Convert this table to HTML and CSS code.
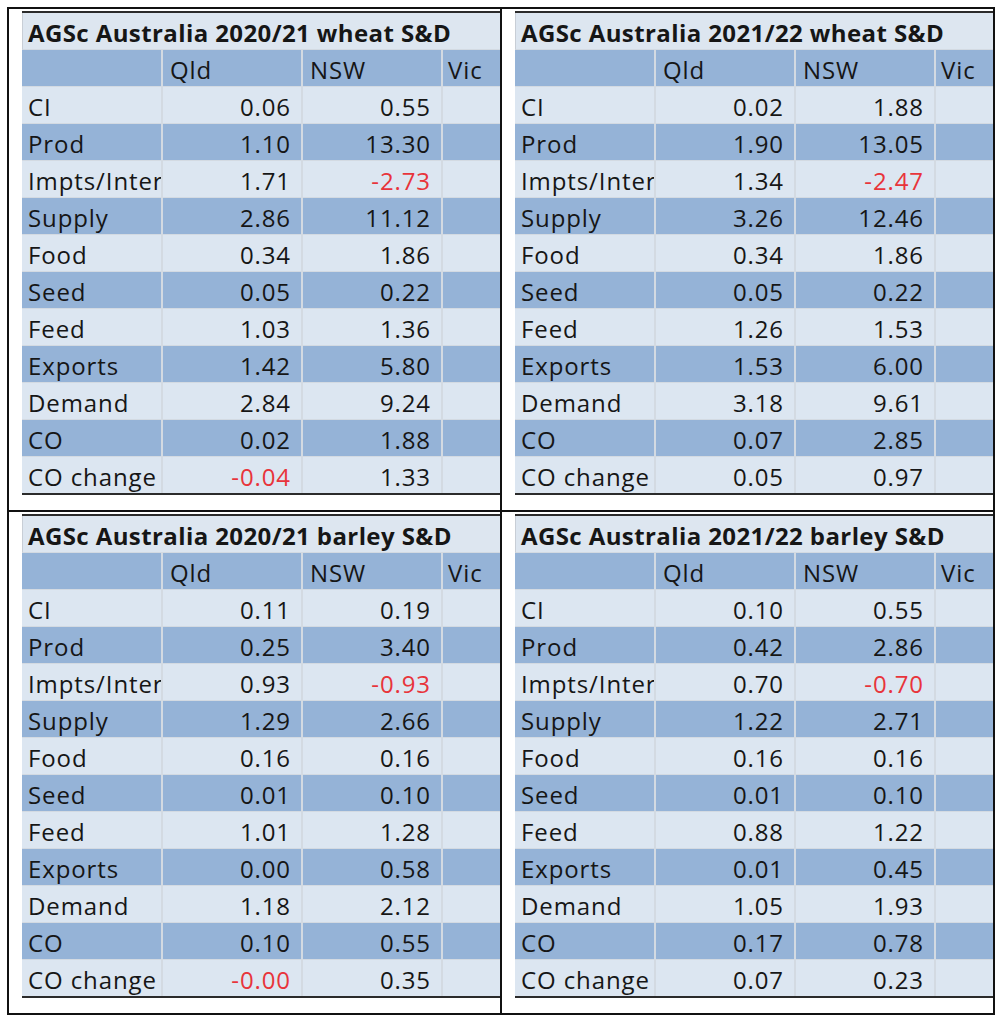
FILE: index.html
```html
<!DOCTYPE html>
<html>
<head>
<meta charset="utf-8">
<link rel="stylesheet" href="styles.css">
</head>
<body>
<div class="frame">
  <div class="quad">
    <table class="sd">
      <colgroup><col class="c-lab"><col class="c-num"><col class="c-num"><col class="c-vic"></colgroup>
      <tr class="title"><td colspan="4">AGSc Australia 2020/21 wheat S&amp;D</td></tr>
      <tr class="dark head"><td></td><td>Qld</td><td>NSW</td><td>Vic</td></tr>
      <tr class="light"><td>CI</td><td>0.06</td><td>0.55</td><td></td></tr>
      <tr class="dark"><td>Prod</td><td>1.10</td><td>13.30</td><td></td></tr>
      <tr class="light"><td>Impts/Inter</td><td>1.71</td><td class="neg">-2.73</td><td></td></tr>
      <tr class="dark"><td>Supply</td><td>2.86</td><td>11.12</td><td></td></tr>
      <tr class="light"><td>Food</td><td>0.34</td><td>1.86</td><td></td></tr>
      <tr class="dark"><td>Seed</td><td>0.05</td><td>0.22</td><td></td></tr>
      <tr class="light"><td>Feed</td><td>1.03</td><td>1.36</td><td></td></tr>
      <tr class="dark"><td>Exports</td><td>1.42</td><td>5.80</td><td></td></tr>
      <tr class="light"><td>Demand</td><td>2.84</td><td>9.24</td><td></td></tr>
      <tr class="dark"><td>CO</td><td>0.02</td><td>1.88</td><td></td></tr>
      <tr class="light last"><td>CO change</td><td class="neg">-0.04</td><td>1.33</td><td></td></tr>
    </table>
  </div>
  <div class="quad">
    <table class="sd">
      <colgroup><col class="c-lab"><col class="c-num"><col class="c-num"><col class="c-vic"></colgroup>
      <tr class="title"><td colspan="4">AGSc Australia 2021/22 wheat S&amp;D</td></tr>
      <tr class="dark head"><td></td><td>Qld</td><td>NSW</td><td>Vic</td></tr>
      <tr class="light"><td>CI</td><td>0.02</td><td>1.88</td><td></td></tr>
      <tr class="dark"><td>Prod</td><td>1.90</td><td>13.05</td><td></td></tr>
      <tr class="light"><td>Impts/Inter</td><td>1.34</td><td class="neg">-2.47</td><td></td></tr>
      <tr class="dark"><td>Supply</td><td>3.26</td><td>12.46</td><td></td></tr>
      <tr class="light"><td>Food</td><td>0.34</td><td>1.86</td><td></td></tr>
      <tr class="dark"><td>Seed</td><td>0.05</td><td>0.22</td><td></td></tr>
      <tr class="light"><td>Feed</td><td>1.26</td><td>1.53</td><td></td></tr>
      <tr class="dark"><td>Exports</td><td>1.53</td><td>6.00</td><td></td></tr>
      <tr class="light"><td>Demand</td><td>3.18</td><td>9.61</td><td></td></tr>
      <tr class="dark"><td>CO</td><td>0.07</td><td>2.85</td><td></td></tr>
      <tr class="light last"><td>CO change</td><td>0.05</td><td>0.97</td><td></td></tr>
    </table>
  </div>
  <div class="quad">
    <table class="sd">
      <colgroup><col class="c-lab"><col class="c-num"><col class="c-num"><col class="c-vic"></colgroup>
      <tr class="title"><td colspan="4">AGSc Australia 2020/21 barley S&amp;D</td></tr>
      <tr class="dark head"><td></td><td>Qld</td><td>NSW</td><td>Vic</td></tr>
      <tr class="light"><td>CI</td><td>0.11</td><td>0.19</td><td></td></tr>
      <tr class="dark"><td>Prod</td><td>0.25</td><td>3.40</td><td></td></tr>
      <tr class="light"><td>Impts/Inter</td><td>0.93</td><td class="neg">-0.93</td><td></td></tr>
      <tr class="dark"><td>Supply</td><td>1.29</td><td>2.66</td><td></td></tr>
      <tr class="light"><td>Food</td><td>0.16</td><td>0.16</td><td></td></tr>
      <tr class="dark"><td>Seed</td><td>0.01</td><td>0.10</td><td></td></tr>
      <tr class="light"><td>Feed</td><td>1.01</td><td>1.28</td><td></td></tr>
      <tr class="dark"><td>Exports</td><td>0.00</td><td>0.58</td><td></td></tr>
      <tr class="light"><td>Demand</td><td>1.18</td><td>2.12</td><td></td></tr>
      <tr class="dark"><td>CO</td><td>0.10</td><td>0.55</td><td></td></tr>
      <tr class="light last"><td>CO change</td><td class="neg">-0.00</td><td>0.35</td><td></td></tr>
    </table>
  </div>
  <div class="quad">
    <table class="sd">
      <colgroup><col class="c-lab"><col class="c-num"><col class="c-num"><col class="c-vic"></colgroup>
      <tr class="title"><td colspan="4">AGSc Australia 2021/22 barley S&amp;D</td></tr>
      <tr class="dark head"><td></td><td>Qld</td><td>NSW</td><td>Vic</td></tr>
      <tr class="light"><td>CI</td><td>0.10</td><td>0.55</td><td></td></tr>
      <tr class="dark"><td>Prod</td><td>0.42</td><td>2.86</td><td></td></tr>
      <tr class="light"><td>Impts/Inter</td><td>0.70</td><td class="neg">-0.70</td><td></td></tr>
      <tr class="dark"><td>Supply</td><td>1.22</td><td>2.71</td><td></td></tr>
      <tr class="light"><td>Food</td><td>0.16</td><td>0.16</td><td></td></tr>
      <tr class="dark"><td>Seed</td><td>0.01</td><td>0.10</td><td></td></tr>
      <tr class="light"><td>Feed</td><td>0.88</td><td>1.22</td><td></td></tr>
      <tr class="dark"><td>Exports</td><td>0.01</td><td>0.45</td><td></td></tr>
      <tr class="light"><td>Demand</td><td>1.05</td><td>1.93</td><td></td></tr>
      <tr class="dark"><td>CO</td><td>0.17</td><td>0.78</td><td></td></tr>
      <tr class="light last"><td>CO change</td><td>0.07</td><td>0.23</td><td></td></tr>
    </table>
  </div>
</div>
</body>
</html>
```

FILE: styles.css
```css
html, body {
  margin: 0;
  padding: 0;
  background: #ffffff;
}

body {
  font-family: "Open Sans", "Liberation Sans", sans-serif;
  color: #161616;
}

.frame {
  margin: 7px 0 0 7px;
  width: 984px;
  height: 1004px;
  border: 2px solid #111;
  display: grid;
  grid-template-columns: 491px 491px;
  grid-template-rows: 501px 501px;
  column-gap: 2px;
  row-gap: 2px;
  background: #111;
}

.quad {
  background: #fff;
  padding: 2px 0 0 13px;
}

.sd {
  width: 478px;
  table-layout: fixed;
  border-collapse: separate;
  border-spacing: 0;
  border-top: 2px solid #2b2b2b;
  border-bottom: 2px solid #2b2b2b;
  font-size: 24px;
  font-weight: 500;
  letter-spacing: 0.9px;
}

.c-lab { width: 141px; }
.c-num { width: 140px; }
.c-vic { width: 57px; }

.sd td {
  padding: 4px 10px 0 0;
  line-height: 32px;
  border-bottom: 1px solid #d3dae2;
  border-right: 2px solid #d3dae2;
  text-align: right;
  white-space: nowrap;
  overflow: hidden;
}

.sd td:first-child {
  text-align: left;
  padding-left: 6px;
  padding-right: 0;
}

.sd td:last-child {
  border-right: none;
}

.sd tr.last td {
  border-bottom: none;
}

.sd tr.title td {
  background: #dde6f0;
  font-weight: 700;
  border-right: none;
  border-left: 1px solid #c8ced6;
  padding-left: 5px;
  text-align: left;
  letter-spacing: 0.4px;
}

.sd tr.head td {
  text-align: left;
  padding-left: 7px;
  padding-right: 0;
}

.sd tr.head td:last-child {
  padding-left: 5px;
}

.light td { background: #dce6f1; }
.dark td { background: #95b3d7; }

.sd td.neg { color: #e8343b; }
```
